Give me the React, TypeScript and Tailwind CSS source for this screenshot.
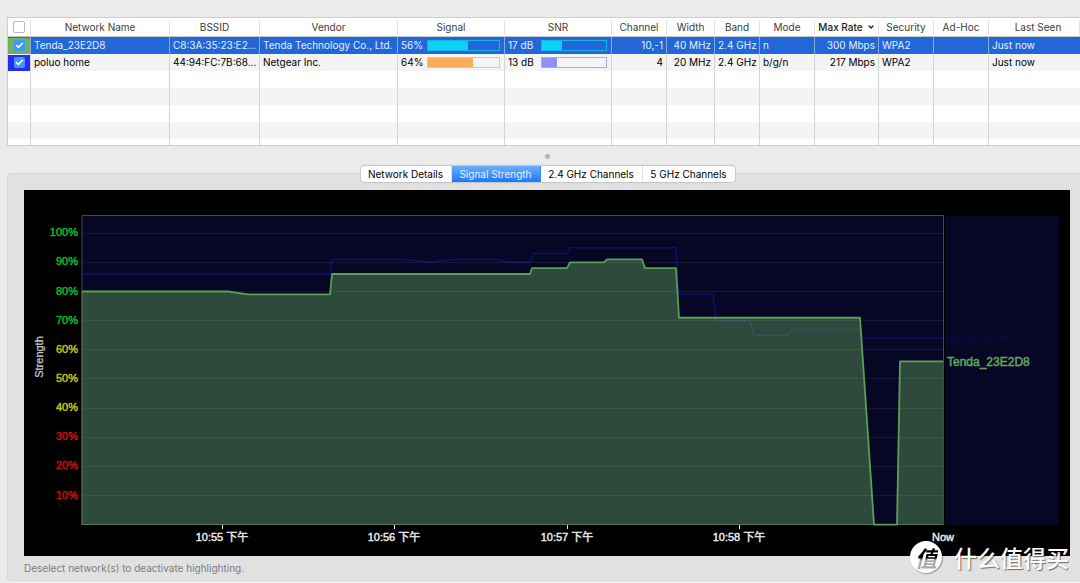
import { Check, ChevronDown } from "lucide-react";

const columns = [
  { title: "Network Name", width: "w-[139px]" },
  { title: "BSSID", width: "w-[90px]" },
  { title: "Vendor", width: "w-[138px]" },
  { title: "Signal", width: "w-[107px]" },
  { title: "SNR", width: "w-[107px]" },
  { title: "Channel", width: "w-[55px]" },
  { title: "Width", width: "w-[48px]" },
  { title: "Band", width: "w-[45px]" },
  { title: "Mode", width: "w-[55px]" },
  { title: "Max Rate", width: "w-[64px]", sorted: true },
  { title: "Security", width: "w-[55px]" },
  { title: "Ad-Hoc", width: "w-[55px]" },
  { title: "Last Seen", width: "w-auto pl-2" },
];

const networks = [
  {
    name: "Tenda_23E2D8",
    bssid: "C8:3A:35:23:E2...",
    vendor: "Tenda Technology Co., Ltd.",
    signal: 56,
    snr: 17,
    channel: "10,-1",
    width: "40 MHz",
    band: "2.4 GHz",
    mode: "n",
    rate: "300 Mbps",
    security: "WPA2",
    seen: "Just now",
    selected: true,
    swatch: "bg-[#6db162]",
    signalBar: "border-[#0fb4ea]",
    signalFill: "bg-[#0cd0f4]",
    snrBar: "border-[#0fb4ea]",
    snrFill: "bg-[#0cd0f4]",
  },
  {
    name: "poluo home",
    bssid: "44:94:FC:7B:68...",
    vendor: "Netgear Inc.",
    signal: 64,
    snr: 13,
    channel: "4",
    width: "20 MHz",
    band: "2.4 GHz",
    mode: "b/g/n",
    rate: "217 Mbps",
    security: "WPA2",
    seen: "Just now",
    selected: false,
    swatch: "bg-[#2a2af8]",
    signalBar: "border-[#fbc182]",
    signalFill: "bg-[#fcad59]",
    snrBar: "border-[#aaa6f8]",
    snrFill: "bg-[#928ef8]",
  },
];

const emptyRows = [
  "h-[17px] bg-white",
  "h-[17px] bg-[#f4f4f4]",
  "h-[17px] bg-white",
  "h-[17px] bg-[#f4f4f4]",
  "h-[6px] bg-white",
];

const tabs = [
  { title: "Network Details", width: "w-[91px]" },
  { title: "Signal Strength", width: "w-[89px]", active: true },
  { title: "2.4 GHz Channels", width: "w-[102px]" },
  { title: "5 GHz Channels", width: "w-[92px]" },
];

// [x, percent]
const tenda = [
  [82, 80], [228, 80], [248, 79], [330, 79], [332, 86], [530, 86], [532, 88],
  [567, 88], [570, 90], [604, 90], [607, 91], [642, 91], [645, 88], [676, 88],
  [679, 71], [860, 71], [874, 0], [897, 0], [900, 56], [943, 56],
];
const poluo = [
  [82, 86], [330, 86], [332, 91], [405, 91], [430, 90], [455, 91], [497, 91],
  [509, 90], [530, 90], [533, 93], [567, 93], [570, 95], [676, 95], [679, 79],
  [713, 79], [716, 70], [750, 70], [754, 65], [788, 65], [791, 67], [860, 67],
  [863, 64], [943, 64],
];

const levels = [
  { value: 100, color: "#00b82c" },
  { value: 90, color: "#00b82c" },
  { value: 80, color: "#00b82c" },
  { value: 70, color: "#00b82c" },
  { value: 60, color: "#bdbd1c" },
  { value: 50, color: "#bdbd1c" },
  { value: 40, color: "#bdbd1c" },
  { value: 30, color: "#cc0c00" },
  { value: 20, color: "#cc0c00" },
  { value: 10, color: "#cc0c00" },
];

const times = [
  { x: 222, label: "10:55 下午" },
  { x: 394, label: "10:56 下午" },
  { x: 567, label: "10:57 下午" },
  { x: 739, label: "10:58 下午" },
];

const yOf = (percent: number) => 524.7 - percent * 2.915;
const toPoints = (series: number[][]) =>
  series.map(([x, p]) => `${x},${yOf(p)}`).join(" ");

function Tick({ label }: { label: string }) {
  return (
    <span className="relative block w-[11px] h-[11px]">
      <input
        type="checkbox"
        defaultChecked
        aria-label={label}
        className="peer appearance-none block w-[11px] h-[11px] rounded-xs bg-white checked:bg-[#3f97f6]"
      />
      <Check
        strokeWidth={4}
        className="absolute top-px left-px w-[9px] h-[9px] text-white pointer-events-none hidden peer-checked:block"
      />
    </span>
  );
}

type BarProps = { text: string; label: string; percent: number; bar: string; fill: string };

function Bar({ text, label, percent, bar, fill }: BarProps) {
  return (
    <div className="flex items-center pr-1">
      <span className={label}>{text}</span>
      <div className={`flex-1 h-[11px] border ${bar}`}>
        <div className={`h-full ${fill}`} style={{ width: `${percent}%` }}></div>
      </div>
    </div>
  );
}

function NetworkTable() {
  return (
    <div className="ml-[7px] border-l border-y border-[#cdcdcd] bg-white overflow-hidden">
      <table className="w-full table-fixed border-separate border-spacing-0 text-[10px] leading-[15px]">
        <thead>
          <tr className="h-[19px] text-[#3c3c3c]">
            <th className="w-[23px] p-0 border-b border-[#c8c8c8]">
              <div className="flex justify-center items-center h-[15px] border-r border-[#e2e2e2]">
                <input
                  type="checkbox"
                  aria-label="Select all networks"
                  className="appearance-none block w-[12px] h-[12px] rounded-xs border border-[#b8b8b8] bg-white"
                />
              </div>
            </th>
            {columns.map((col) => (
              <th
                key={col.title}
                className={`${col.width} py-0 pr-0 border-b border-[#c8c8c8] whitespace-nowrap ${
                  col.sorted ? "font-medium text-[#222]" : "font-normal"
                }`}
              >
                <div className="flex justify-center items-center gap-1 h-[15px] border-r border-[#e2e2e2]">
                  {col.title}
                  {col.sorted && <ChevronDown strokeWidth={4} className="w-2 h-2" />}
                </div>
              </th>
            ))}
          </tr>
        </thead>
        <tbody>
          {networks.map((net) => (
            <tr
              key={net.name}
              className={
                net.selected
                  ? "h-[17px] bg-[#2167d7] text-[#e4eeff] *:border-[#86a9de]"
                  : "h-[17px] bg-[#f4f4f4] text-black *:border-[#d4d4d4]"
              }
            >
              <td className="p-0 border-r">
                <div className={`flex justify-center items-center h-[16px] ${net.swatch}`}>
                  <Tick label={net.name} />
                </div>
              </td>
              <td className="py-0 px-[3px] border-r">{net.name}</td>
              <td className="py-0 pl-[3px] pr-0 border-r whitespace-nowrap">{net.bssid}</td>
              <td className="py-0 px-[3px] border-r whitespace-nowrap">{net.vendor}</td>
              <td className="py-0 pl-[3px] pr-0 border-r">
                <Bar
                  text={`${net.signal}%`}
                  label="w-[26px]"
                  percent={net.signal}
                  bar={net.signalBar}
                  fill={net.signalFill}
                />
              </td>
              <td className="py-0 pl-[3px] pr-0 border-r">
                <Bar
                  text={`${net.snr} dB`}
                  label="w-[33px]"
                  percent={net.snr * 1.8}
                  bar={net.snrBar}
                  fill={net.snrFill}
                />
              </td>
              <td className="py-0 px-[3px] border-r text-right">{net.channel}</td>
              <td className="py-0 px-[3px] border-r text-right whitespace-nowrap">{net.width}</td>
              <td className="py-0 px-[3px] border-r whitespace-nowrap">{net.band}</td>
              <td className="py-0 px-[3px] border-r">{net.mode}</td>
              <td className="py-0 px-[3px] border-r text-right whitespace-nowrap">{net.rate}</td>
              <td className="py-0 px-[3px] border-r">{net.security}</td>
              <td className="p-0 border-r"></td>
              <td className="py-0 px-[3px]">{net.seen}</td>
            </tr>
          ))}
          {emptyRows.map((row, i) => (
            <tr key={i} className={row}>
              <td className="p-0 border-r border-[#d4d4d4]"></td>
              {columns.map((col) => (
                <td key={col.title} className="p-0 border-r border-[#d4d4d4] last:border-r-0"></td>
              ))}
            </tr>
          ))}
        </tbody>
      </table>
    </div>
  );
}

function Tabs() {
  return (
    <div className="relative flex justify-center -mb-[9px] pl-[15px]">
      <div className="flex h-4 rounded-sm bg-white overflow-hidden shadow-[0_0_1px_1px_#c4c4c4]">
        {tabs.map((tab) => (
          <button
            key={tab.title}
            className={`${tab.width} text-[10px] leading-4 whitespace-nowrap border-r last:border-r-0 ${
              tab.active
                ? "border-[#3b8bfb] bg-linear-to-b from-[#69b0fa] to-[#1f75fc] text-[#e4f0ff]"
                : "border-[#e0e0e0] text-black"
            }`}
          >
            {tab.title}
          </button>
        ))}
      </div>
    </div>
  );
}

function StrengthChart() {
  return (
    <svg
      viewBox="24 190 1046 366"
      className="block w-full bg-black font-['Liberation_Sans','Noto_Sans_CJK_SC',sans-serif]"
      role="img"
      aria-label="Signal Strength"
    >
      <rect x="82" y="216" width="862" height="309" fill="#060625" />
      <rect x="945" y="216" width="114" height="309" fill="#060625" />

      <polyline points={toPoints(poluo)} fill="none" stroke="#10106b" strokeWidth="1.5" />
      <polygon
        points={`82,524.7 ${toPoints(tenda)} 943,524.7`}
        fill="#6cb25f"
        fillOpacity="0.4"
      />
      {levels.map(({ value }) => (
        <line
          key={value}
          x1="82"
          x2="943"
          y1={Math.floor(yOf(value)) + 0.5}
          y2={Math.floor(yOf(value)) + 0.5}
          stroke="#fff"
          strokeOpacity="0.14"
          strokeDasharray="1 1"
        />
      ))}
      <path d="M82 525V215.5H943.5V525" fill="none" stroke="#47474f" />
      <path d="M82 292V524.5H874M897 524.5H943" fill="none" stroke="#4f7a55" />
      <polyline
        points={toPoints(tenda)}
        fill="none"
        stroke="#5c9f54"
        strokeWidth="1.8"
        strokeLinejoin="round"
      />

      {levels.map(({ value, color }) => (
        <text
          key={value}
          x="78"
          y={yOf(value) + 3}
          textAnchor="end"
          fill={color}
          stroke={color}
          strokeWidth="0.5"
          fontSize="11"
        >
          {value}%
        </text>
      ))}
      <text
        transform="translate(43 357) rotate(-90)"
        textAnchor="middle"
        fill="#c4c4c4"
        stroke="#c4c4c4"
        strokeWidth="0.3"
        fontSize="11"
      >
        Strength
      </text>

      {times.map(({ x, label }) => (
        <g key={x}>
          <line x1={x + 0.5} x2={x + 0.5} y1="525" y2="529" stroke="#e8e8e8" />
          <text x={x} y="541" textAnchor="middle" fill="#eee" stroke="#eee" strokeWidth="0.4" fontSize="11">
            {label}
          </text>
        </g>
      ))}
      <text x="943" y="541" textAnchor="middle" fill="#eee" stroke="#eee" strokeWidth="0.4" fontSize="11">
        Now
      </text>

      <text x="947" y="342" fill="#0b0b3c" stroke="#0b0b3c" strokeWidth="0.5" fontSize="12">
        poluo home
      </text>
      <text x="947" y="366" fill="#62a857" stroke="#62a857" strokeWidth="0.5" fontSize="12">
        Tenda_23E2D8
      </text>
    </svg>
  );
}

function Watermark() {
  return (
    <div className="absolute right-[11px] bottom-[10px] flex items-center gap-3 font-['Noto_Sans_CJK_SC',sans-serif]">
      <div className="flex justify-center items-center w-8 h-8 rounded-full bg-white shadow-[1px_1px_1px_#0005]">
        <span className="px-px text-[22px] leading-8 font-bold italic text-transparent bg-clip-text bg-linear-to-b from-black from-50% to-[#aaa] to-60%">
          值
        </span>
      </div>
      <span className="text-[23px] leading-8 font-medium text-white [text-shadow:1px_1px_1px_#0008]">
        什么值得买
      </span>
    </div>
  );
}

export default function App() {
  return (
    <div className="relative min-h-screen pt-[17px] bg-[#ebebeb] overflow-hidden font-[Inter,sans-serif]">
      <NetworkTable />
      <div className="flex justify-center items-center h-5 pl-[15px]">
        <div className="w-[5px] h-[5px] rounded-full bg-[#b4b4b4]"></div>
      </div>
      <Tabs />
      <div className="ml-[7px] pl-4 pr-[10px] pt-4 border-l border-y border-[#d6d6d6] rounded-l-sm bg-[#e1e1e1]">
        <StrengthChart />
        <p className="py-1 text-[10px] leading-4 text-[#7d7d7d]">
          Deselect network(s) to deactivate highlighting.
        </p>
      </div>
      <Watermark />
    </div>
  );
}
